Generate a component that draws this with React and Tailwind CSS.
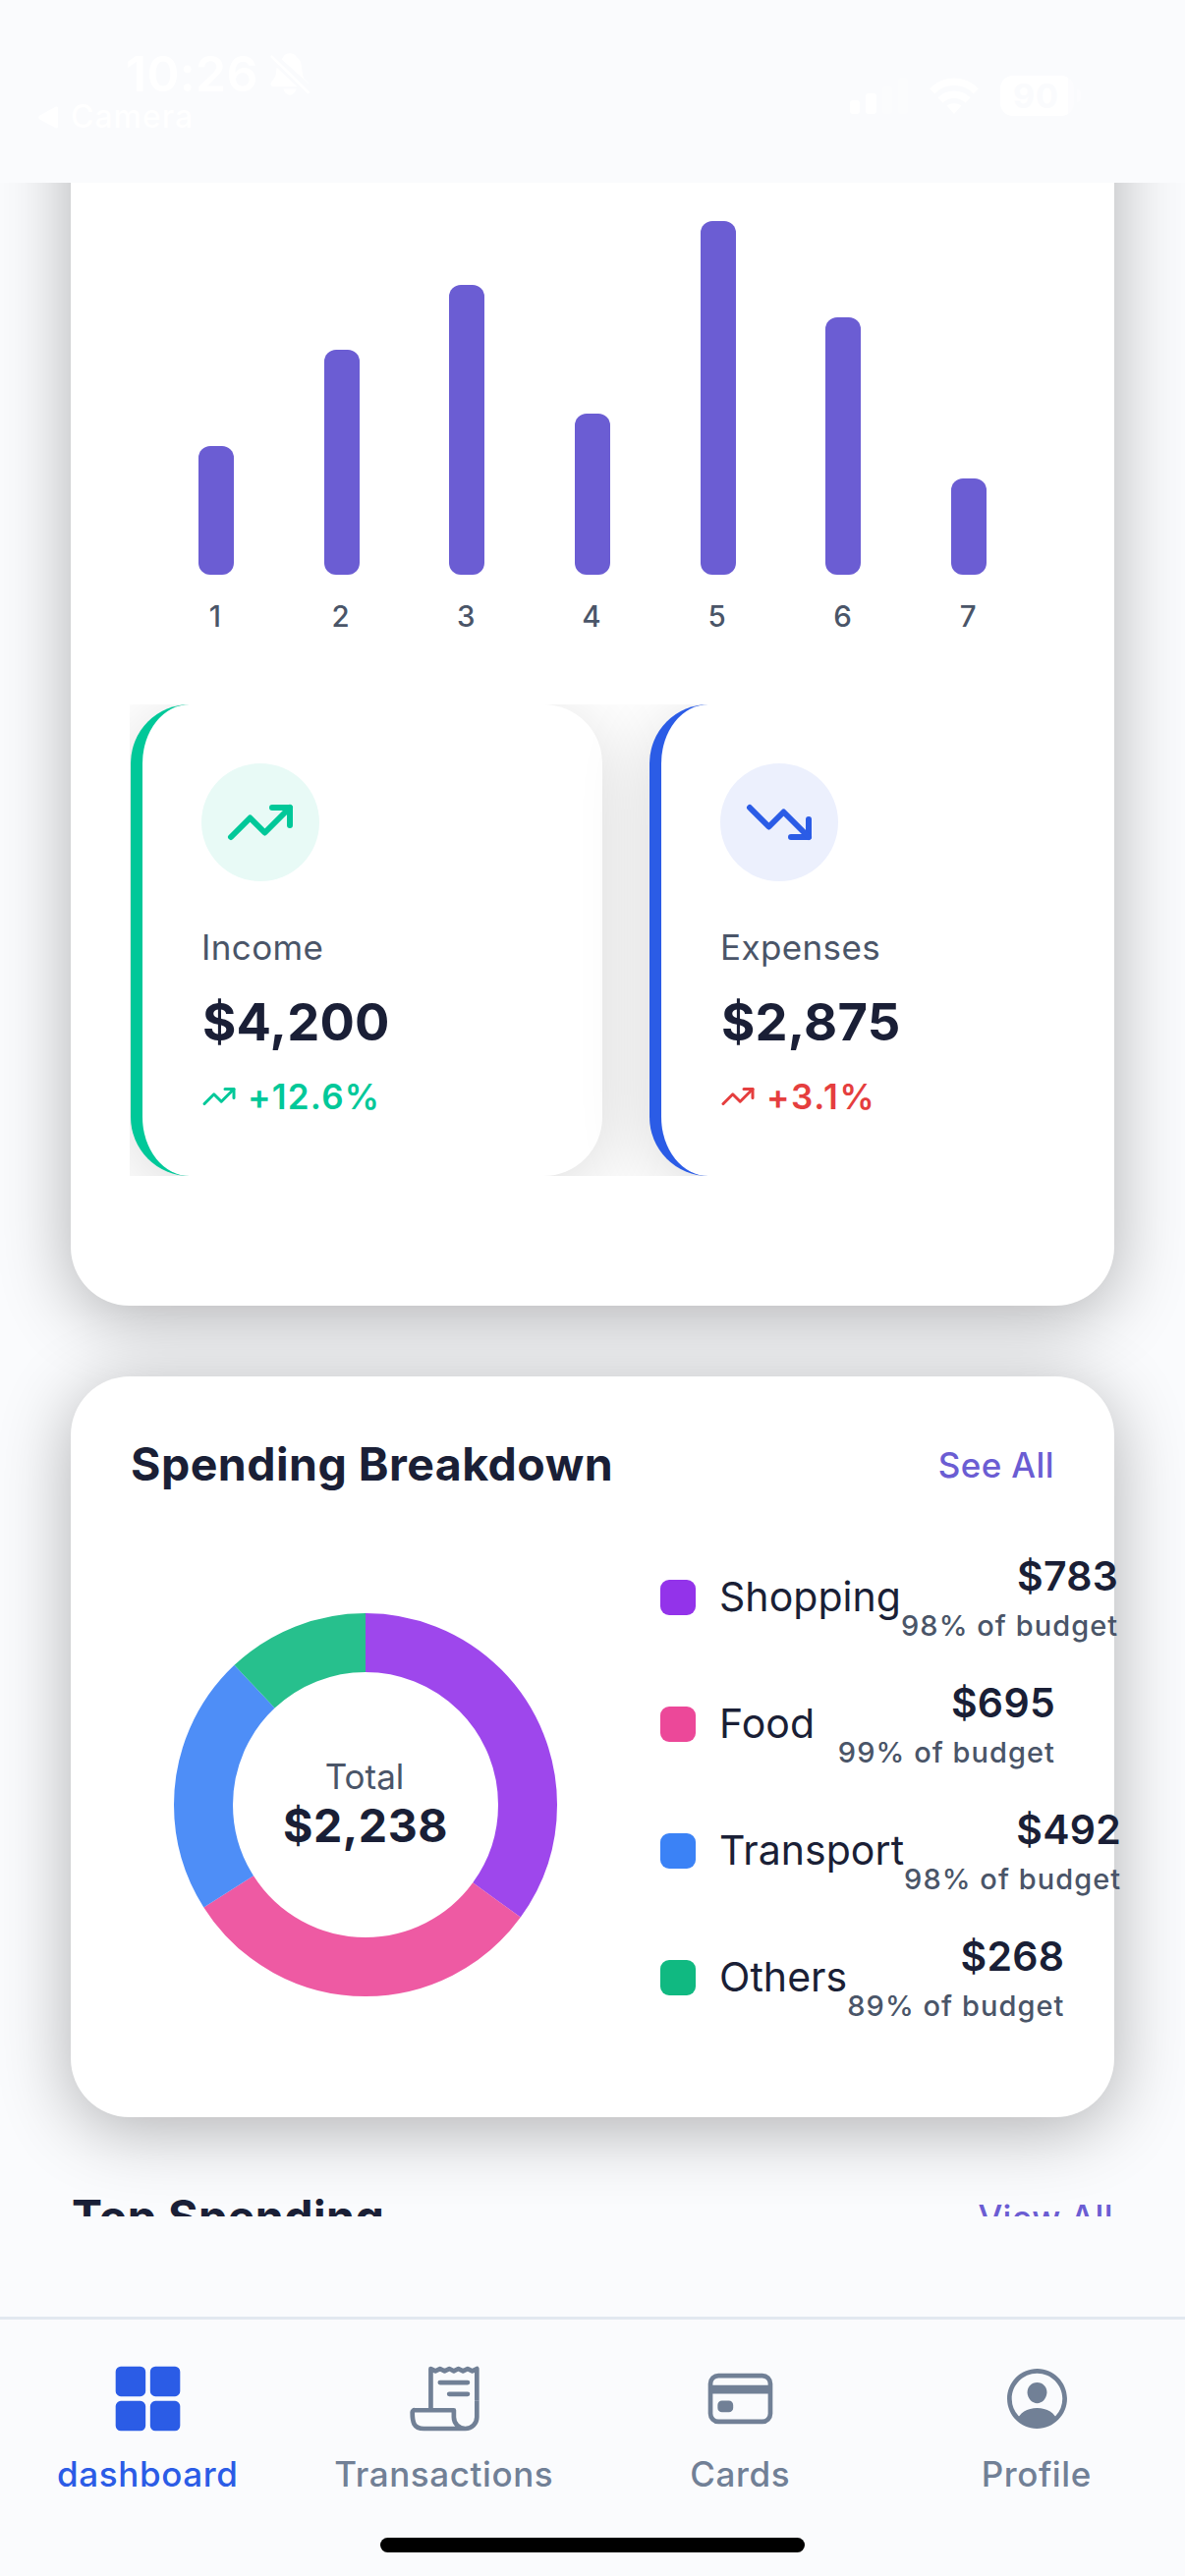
import React from "react";
import { TrendingUp, TrendingDown } from "lucide-react";
import {
  IoGrid,
  IoReceiptOutline,
  IoCardOutline,
  IoPersonCircleOutline,
} from "react-icons/io5";

const bars = [
  { label: "1", height: 131 },
  { label: "2", height: 229 },
  { label: "3", height: 295 },
  { label: "4", height: 164 },
  { label: "5", height: 360 },
  { label: "6", height: 262 },
  { label: "7", height: 98 },
];

const stats = [
  {
    label: "Income",
    amount: "$4,200",
    change: "+12.6%",
    Icon: TrendingUp,
    border: "border-[#00c899]",
    iconStyle: "bg-[#e8faf6] text-[#00c899]",
    changeStyle: "text-[#00c899] tracking-[1.2px]",
  },
  {
    label: "Expenses",
    amount: "$2,875",
    change: "+3.1%",
    Icon: TrendingDown,
    border: "border-[#2b5ce6]",
    iconStyle: "bg-[#ecf0fd] text-[#2b5ce6]",
    changeStyle: "text-[#e53e3e] tracking-[1.7px]",
  },
];

const categories = [
  { name: "Shopping", amount: "$783", budget: "98% of budget", share: 35, swatch: "bg-[#9333ea]", stroke: "#9333ea" },
  { name: "Food", amount: "$695", budget: "99% of budget", share: 31, swatch: "bg-[#ec4899]", stroke: "#ec4899" },
  { name: "Transport", amount: "$492", budget: "98% of budget", share: 22, swatch: "bg-[#3b82f6]", stroke: "#3b82f6" },
  { name: "Others", amount: "$268", budget: "89% of budget", share: 12, swatch: "bg-[#10b981]", stroke: "#10b981" },
];

const tabs = [
  { label: "dashboard", Icon: IoGrid, active: true },
  { label: "Transactions", Icon: IoReceiptOutline },
  { label: "Cards", Icon: IoCardOutline },
  { label: "Profile", Icon: IoPersonCircleOutline },
];

function StatusBar() {
  return (
    <header className="flex h-[186px] shrink-0 justify-between text-white">
      <div className="pt-[50px]">
        <div className="flex h-[50px] items-center pl-[128px]">
          <span className="text-[50px] leading-[50px] font-semibold tracking-[0.3px]">10:26</span>
          <svg className="ml-[12px] h-[43px] w-[40px]" viewBox="0 0 40 43" fill="currentColor">
            <path d="M11.5 6.2C14 4.600 13.500 .3 19.800 .3S26.500 4.500 29 6C32.500 9 32 17 33.500 24C34.500 27.500 38 28 39.500 31.500Z" />
            <path d="M6.500 14.500L27.300 34.300H3.500C.5 34.300-.2 31.500 1.200 29.500C3.500 27 5.500 24.500 6 20.500Z" />
            <path d="M13.300 36.500H26.700C25.500 40.500 23 42.700 20 42.700S14.500 40.500 13.300 36.500Z" />
            <path d="M1.700 3.600L38.700 40" stroke="currentColor" strokeWidth="2.600" strokeLinecap="round" />
          </svg>
        </div>
        <div className="mt-px flex h-[36px] items-center gap-[13px] pl-[39px]">
          <svg className="h-[23px] w-[20px]" viewBox="0 0 20 21" preserveAspectRatio="none" fill="currentColor">
            <path d="M1 9Q-.5 10.500 1 12L18 20.500Q20 21 20 19V2Q20 0 18 .5Z" />
          </svg>
          <span className="text-[32px] leading-[36px] font-medium tracking-[0.98px]">Camera</span>
        </div>
      </div>
      <div className="mt-[77px] flex h-[41px] items-center pr-[106px]">
        <div className="flex h-[37px] items-end gap-[6px]">
          <div className="h-[14px] w-[10px] rounded-[3px] bg-white" />
          <div className="h-[21px] w-[11px] rounded-[3px] bg-white" />
          <div className="h-[28px] w-[10px] rounded-[3px] bg-white/30" />
          <div className="h-[37px] w-[10px] rounded-[3px] bg-white/30" />
        </div>
        <svg className="ml-[22px] h-[38px] w-[50px]" viewBox="0 0 50 38" fill="none" stroke="currentColor" strokeWidth="7.500">
          <path d="M2.700 13.800A31 31 0 0 1 47.300 13.800" />
          <path d="M11 23A20 20 0 0 1 39 23" />
          <path d="M17.500 28.500Q25 24 32.500 28.500L25 37Z" fill="currentColor" stroke="none" />
        </svg>
        <div className="ml-[22px] flex h-[41px] w-[75px] overflow-hidden rounded-[13px] bg-white/40">
          <div className="flex h-full w-[69px] items-center bg-white pl-[13px]">
            <span className="text-[34px] leading-[41px] font-bold tracking-[0.9px] text-[#fafbfd]">90</span>
          </div>
        </div>
        <div className="ml-[3px] h-[13px] w-[4px] rounded-r-[4px] bg-white/40" />
      </div>
    </header>
  );
}

function BarChart() {
  return (
    <div className="grid grid-cols-7 px-[24px]">
      {bars.map((bar) => (
        <div key={bar.label} className="flex flex-col items-center justify-end">
          <div className="w-[36px] rounded-[12px] bg-[#6b5dd3]" style={{ height: bar.height }} />
          <span className="mt-[24px] pr-[2px] text-[29.5px] leading-[36px] font-medium text-[#4a5568]">
            {bar.label}
          </span>
        </div>
      ))}
    </div>
  );
}

function StatCard({ label, amount, change, Icon, border, iconStyle, changeStyle }) {
  return (
    <div
      className={`h-[480px] w-[480px] shrink-0 rounded-[60px] border-l-[12px] bg-white p-[60px] shadow-[0_12px_72px_rgba(0,0,0,0.15)] ${border}`}
    >
      <div className={`flex size-[120px] items-center justify-center rounded-full ${iconStyle}`}>
        <Icon size={72} strokeWidth={2} />
      </div>
      <div className="mt-[43px] text-[35px] leading-[48px] tracking-[0.38px] text-[#4a5568]">{label}</div>
      <div className="mt-[22px] ml-[1px] text-[52.5px] leading-[60px] font-bold tracking-[0.2px] text-[#1a1f36]">
        {amount}
      </div>
      <div className={`mt-[22px] flex items-center gap-[11px] text-[35px] leading-[48px] font-semibold ${changeStyle}`}>
        <TrendingUp size={36} strokeWidth={2} />
        <span>{change}</span>
      </div>
    </div>
  );
}

function Donut() {
  let start = 0;
  return (
    <div className="relative mt-[77px] size-[480px] shrink-0">
      <svg className="size-full -rotate-90" viewBox="0 0 480 480" fill="none" strokeWidth="60">
        {categories.map((c) => {
          const offset = -start;
          start += c.share;
          return (
            <circle
              key={c.name}
              cx="240"
              cy="240"
              r="165"
              pathLength="100"
              stroke={c.stroke}
              strokeOpacity="0.9"
              strokeDasharray={`${c.share} ${100 - c.share}`}
              strokeDashoffset={offset}
            />
          );
        })}
      </svg>
      <div className="absolute inset-0 flex flex-col items-center justify-center pb-[4px]">
        <span className="pr-[2px] text-[35px] leading-[46px] text-[#4a5568]">Total</span>
        <span className="text-[46.5px] leading-[54px] font-bold tracking-[0.5px] text-[#1a1f36]">$2,238</span>
      </div>
    </div>
  );
}

function Legend() {
  return (
    <ul className="mt-[59px] ml-[60px] flex w-[402px] flex-col gap-[35px] whitespace-nowrap">
      {categories.map((c) => (
        <li key={c.name} className="flex h-[94px] justify-between">
          <div className="flex shrink-0 items-center gap-[24px]">
            <span className={`size-[36px] rounded-[9px] ${c.swatch}`} />
            <span className="pb-[2px] text-[41px] leading-[50px] tracking-[0.05px] text-[#1a1f36]">{c.name}</span>
          </div>
          <div className="shrink-0 text-right">
            <div className="text-[41px] leading-[50px] font-semibold tracking-[0.3px] text-[#1a1f36]">{c.amount}</div>
            <div className="mt-[8px] text-[29px] leading-[36px] font-medium tracking-[1.05px] text-[#4a5568]">
              {c.budget}
            </div>
          </div>
        </li>
      ))}
    </ul>
  );
}

function SectionHeader({ title, action }) {
  return (
    <div className="flex items-center justify-between whitespace-nowrap">
      <h2 className="ml-[1px] text-[46.5px] leading-[60px] font-bold tracking-[0.45px] text-[#1a1f36]">{title}</h2>
      <a className="pt-[2px] pr-[1px] text-[35px] leading-[58px] font-medium tracking-[0.4px] text-[#6b5dd3]">
        {action}
      </a>
    </div>
  );
}

export default function App() {
  return (
    <div className="flex h-[2622px] w-[1206px] flex-col overflow-hidden bg-[#fafbfd] font-['Inter',sans-serif]">
      <StatusBar />

      <main className="h-[2070px] shrink-0 overflow-hidden px-[72px]">
        <section className="-mt-[200px] flex h-[1343px] flex-col justify-end rounded-[60px] bg-white px-[60px] pb-[132px] shadow-[0_12px_72px_rgba(0,0,0,0.3)]">
          <BarChart />
          <div className="mt-[72px] flex gap-[48px] overflow-hidden pl-px">
            {stats.map((s) => (
              <StatCard key={s.label} {...s} />
            ))}
          </div>
        </section>

        <section className="mt-[72px] h-[754px] rounded-[60px] bg-white px-[60px] pt-[59px] shadow-[0_12px_72px_rgba(0,0,0,0.3)]">
          <SectionHeader title="Spending Breakdown" action="See All" />
          <div className="flex items-start">
            <Donut />
            <Legend />
          </div>
        </section>

        <section className="mt-[71px]">
          <SectionHeader title="Top Spending" action="View All" />
        </section>
      </main>

      <nav className="mt-[102px] flex h-[264px] flex-col border-t-[3px] border-[#e2e8f0]">
        <div className="grid grid-cols-4 pt-[43px]">
          {tabs.map(({ label, Icon, active }) => (
            <div
              key={label}
              className={`flex flex-col items-center ${active ? "text-[#2b5ce6]" : "text-[#718096]"}`}
            >
              <Icon size={75} />
              <span className="mt-[15px] pr-px text-[35px] leading-[48px] font-medium tracking-[0.6px]">{label}</span>
            </div>
          ))}
        </div>
        <div className="mx-auto mt-[41px] h-[15px] w-[432px] rounded-full bg-black" />
      </nav>
    </div>
  );
}
